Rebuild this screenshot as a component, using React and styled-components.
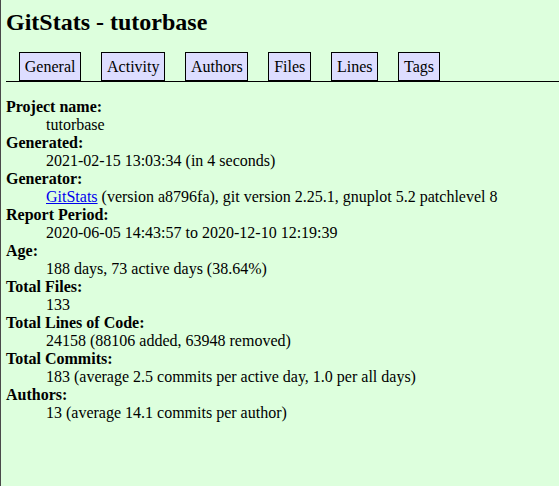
import React from 'react';
import styled, { createGlobalStyle } from 'styled-components';

const GlobalStyle = createGlobalStyle`
  html, body {
    margin: 0;
    padding: 0;
    background-color: #dfd;
  }
  body {
    color: black;
    font-family: "Liberation Serif", "Times New Roman", serif;
    font-size: 16px;
  }
`;

const Page = styled.div`
  min-height: 100vh;
  box-sizing: border-box;
  border-left: 1px solid #4a4a4a;
  padding: 8px 0 0 5px;
`;

const Title = styled.h1`
  font-size: 24px;
  line-height: 28px;
  font-weight: bold;
  margin: 0 0 13px 0;
`;

const Nav = styled.div`
  display: flex;
  align-items: flex-end;
  gap: 20px;
  height: 32px;
  border-bottom: 1px solid black;
  padding-left: 13px;
`;

const Tab = styled.a`
  display: block;
  box-sizing: border-box;
  height: 29px;
  line-height: 27px;
  padding: 0 4.8px;
  text-decoration: none;
  color: black;
  border: 1px solid black;
  background-color: #ddf;
  white-space: nowrap;
`;

const StatList = styled.dl`
  margin: 16px 0 0 0;
  line-height: 18px;
`;

const Term = styled.dt`
  font-weight: bold;
  &:after {
    content: ':';
  }
`;

const Desc = styled.dd`
  margin-left: 40px;
  white-space: nowrap;
`;

const Link = styled.a`
  color: #0000ee;
  text-decoration: underline;
`;

const tabs = ['General', 'Activity', 'Authors', 'Files', 'Lines', 'Tags'];

const stats = [
    { label: 'Project name', value: 'tutorbase' },
    { label: 'Generated', value: '2021-02-15 13:03:34 (in 4 seconds)' },
    {
        label: 'Generator',
        value: (
            <>
                <Link href="#">GitStats</Link> (version a8796fa), git version 2.25.1, gnuplot 5.2 patchlevel 8
            </>
        ),
    },
    { label: 'Report Period', value: '2020-06-05 14:43:57 to 2020-12-10 12:19:39' },
    { label: 'Age', value: '188 days, 73 active days (38.64%)' },
    { label: 'Total Files', value: '133' },
    { label: 'Total Lines of Code', value: '24158 (88106 added, 63948 removed)' },
    { label: 'Total Commits', value: '183 (average 2.5 commits per active day, 1.0 per all days)' },
    { label: 'Authors', value: '13 (average 14.1 commits per author)' },
];

const App = () => {
    return (
        <>
            <GlobalStyle />
            <Page>
                <Title>GitStats - tutorbase</Title>

                {/*===== Nav tabs =====*/}
                <Nav>
                    {tabs.map((t) => (
                        <Tab key={t} href="#">{t}</Tab>
                    ))}
                </Nav>

                {/*===== General stats =====*/}
                <StatList>
                    {stats.map((s) => (
                        <React.Fragment key={s.label}>
                            <Term>{s.label}</Term>
                            <Desc>{s.value}</Desc>
                        </React.Fragment>
                    ))}
                </StatList>
            </Page>
        </>
    );
};

export default App;
